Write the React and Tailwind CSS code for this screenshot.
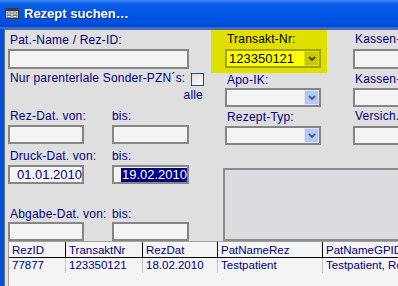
import React from 'react';

const label = 'h-[14px] leading-[14px] whitespace-nowrap tracking-[0.2px] text-[#000080]';
const field = 'border-2 border-[#868686] bg-[#f4f4f4]';

const Chevron = ({ color }) => (
  <svg width="8" height="5" viewBox="0 0 8 5">
    <path d="M1 1 L4 4 L7 1" fill="none" stroke={color} strokeWidth="2" />
  </svg>
);

// combo box with XP style drop button
const Combo = ({ value, yellow, className = '' }) => (
  <div
    className={`flex h-[19px] w-[96px] ${
      yellow ? 'border-2 border-[#a3a300] bg-[#ffff00]' : field
    } ${className}`}
  >
    <div className="flex-1 pl-[2px] text-[13px] leading-[15px] text-black">{value}</div>
    <div
      className={`flex w-[15px] items-center justify-center border ${
        yellow ? 'border-[#e2e200] bg-[#c9c900]' : 'border-[#dce6fc] bg-[#b4c8f6]'
      }`}
    >
      <Chevron color={yellow ? '#4a4a00' : '#4c5f86'} />
    </div>
  </div>
);

const TitleIcon = () => (
  <svg width="14" height="11" viewBox="0 0 14 11">
    <rect x="0.5" y="0.5" width="13" height="10" fill="#e8e8e8" stroke="#3a3a3a" />
    <rect x="1" y="1" width="12" height="2" fill="#3a3a3a" />
    <rect x="2" y="4" width="4" height="2" fill="#fff" stroke="#5a5a5a" strokeWidth="0.8" />
    <rect x="8" y="4" width="4" height="2" fill="#fff" stroke="#5a5a5a" strokeWidth="0.8" />
    <rect x="2" y="7.5" width="4" height="2" fill="#fff" stroke="#5a5a5a" strokeWidth="0.8" />
    <rect x="8" y="7.5" width="4" height="2" fill="#fff" stroke="#5a5a5a" strokeWidth="0.8" />
  </svg>
);

const columns = [
  { head: 'RezID', val: '77877', w: 'w-[57px]' },
  { head: 'TransaktNr', val: '123350121', w: 'w-[77px]' },
  { head: 'RezDat', val: '18.02.2010', w: 'w-[75px]' },
  { head: 'PatNameRez', val: 'Testpatient', w: 'w-[105px]' },
  { head: 'PatNameGPID', val: 'Testpatient, Ro', w: 'w-[120px]' },
];

export default function App() {
  return (
    <div className="h-[286px] w-[398px] overflow-hidden bg-[#0050dc] font-['Liberation_Sans',Arial,sans-serif] text-[12px]">
      {/* Title bar */}
      <div className="flex h-[27px] items-center bg-[linear-gradient(to_bottom,#3d8af7_0%,#0a5ee6_14%,#0056e6_50%,#0050dc_85%,#0049cf_100%)] pl-[5px]">
        <TitleIcon />
        <span className="ml-[5px] text-[13px] font-bold text-white [text-shadow:1px_1px_0_#0a2a8a]">
          Rezept suchen…
        </span>
      </div>

      <div className="flex h-[259px] border-t-2 border-[#2f6ce8] pl-[4px]">
        {/* Client area */}
        <div className="flex min-w-0 flex-1 flex-col overflow-hidden border-l border-t border-[#6e6e6e] bg-[#dfdfdf]">
          <div className="flex h-[211px]">
            {/* Left column */}
            <div className="ml-[3px] flex w-[196px] shrink-0 flex-col">
              <div className={`${label} mt-[3px] pl-[2px]`}>Pat.-Name / Rez-ID:</div>
              <div className={`${field} mt-[2px] h-[20px] w-[181px]`} />
              <div className="mt-[2px] flex h-[16px] justify-between">
                <div className={`${label} pl-[2px]`}>Nur parenterlale Sonder-PZN´s:</div>
                <div className="mt-[2px] h-[13px] w-[13px] shrink-0 border border-[#1c5180] bg-[linear-gradient(135deg,#dcdcd7,#ffffff)]" />
              </div>
              <div className={`${label} mt-[1px] pr-[1px] text-right`}>alle</div>

              <div className="mt-[7px] grid grid-cols-[76px_77px] gap-x-[28px]">
                <div className={`${label} pl-[2px]`}>Rez-Dat. von:</div>
                <div className={label}>bis:</div>
                <div className={`${field} mt-[2px] h-[19px]`} />
                <div className={`${field} mt-[2px] h-[19px]`} />

                <div className={`${label} mt-[5px] pl-[2px]`}>Druck-Dat. von:</div>
                <div className={`${label} mt-[5px]`}>bis:</div>
                <div className={`${field} mt-[2px] flex h-[19px] items-center justify-end leading-[14px] text-[13px] text-[#000080]`}>
                  01.01.2010
                </div>
                <div className={`${field} mt-[2px] flex h-[19px] items-center justify-end leading-[14px] text-[13px]`}>
                  <span className="bg-[#000080] pl-[1px] text-white">19.02.2010</span>
                </div>

                <div className={`${label} mt-[23px] pl-[2px]`}>Abgabe-Dat. von:</div>
                <div className={`${label} mt-[23px]`}>bis:</div>
                <div className={`${field} mt-[1px] h-[19px]`} />
                <div className={`${field} mt-[1px] h-[19px]`} />
              </div>
            </div>

            {/* Right area */}
            <div className="ml-[7px] flex min-w-0 flex-1 flex-col overflow-hidden">
              <div className="flex">
                <div className="flex w-[116px] shrink-0 flex-col">
                  <div className="flex h-[43px] flex-col bg-[#dfdf00] pl-[14px] pt-[2px]">
                    <div className="h-[14px] pl-[2px] leading-[14px] tracking-[0.2px] text-black">Transakt-Nr:</div>
                    <Combo yellow value="123350121" className="mt-[3px]" />
                  </div>
                  <div className="pl-[14px]">
                    <div className={`${label} pl-[2px]`}>Apo-IK:</div>
                    <Combo className="mt-[1px] w-[94px]" />
                    <div className={`${label} mt-[3px] pl-[2px]`}>Rezept-Typ:</div>
                    <Combo className="mt-[2px]" />
                  </div>
                </div>
                <div className="ml-[26px] flex shrink-0 flex-col">
                  <div className={`${label} mt-[2px] pl-[2px]`}>Kassen-Name:</div>
                  <div className={`${field} mt-[3px] h-[20px] w-[90px]`} />
                  <div className={`${label} mt-[3px] pl-[2px]`}>Kassen-IK:</div>
                  <div className={`${field} mt-[2px] h-[19px] w-[90px]`} />
                  <div className={`${label} mt-[2px] pl-[2px]`}>Versich.-Nr:</div>
                  <div className={`${field} mt-[3px] h-[19px] w-[90px]`} />
                </div>
              </div>
              {/* Subform placeholder */}
              <div className="ml-[12px] mt-[23px] h-[73px] w-[200px] shrink-0 border-2 border-r-0 border-[#8c8c8c] bg-[#dcdbdf]" />
            </div>
          </div>

          {/* Result list */}
          <div className="ml-[3px] flex-1 border-l border-t border-[#a0a0a0] bg-[#f4f4f4] text-[11.5px] text-[#000080]">
            <div className="flex h-[16px] border-b border-black">
              {columns.map((c, i) => (
                <div
                  key={c.head}
                  className={`${c.w} shrink-0 whitespace-nowrap pl-[3px] pt-[1px] leading-[14px] ${
                    i < columns.length - 1 ? 'border-r border-black' : ''
                  }`}
                >
                  {c.head}
                </div>
              ))}
            </div>
            <div className="flex h-[15px]">
              {columns.map((c, i) => (
                <div
                  key={c.head}
                  className={`${c.w} shrink-0 whitespace-nowrap pl-[3px] leading-[14px] ${
                    i < columns.length - 1 ? 'border-r border-[#c4c4c4]' : ''
                  }`}
                >
                  {c.val}
                </div>
              ))}
            </div>
          </div>
        </div>
      </div>
    </div>
  );
}
